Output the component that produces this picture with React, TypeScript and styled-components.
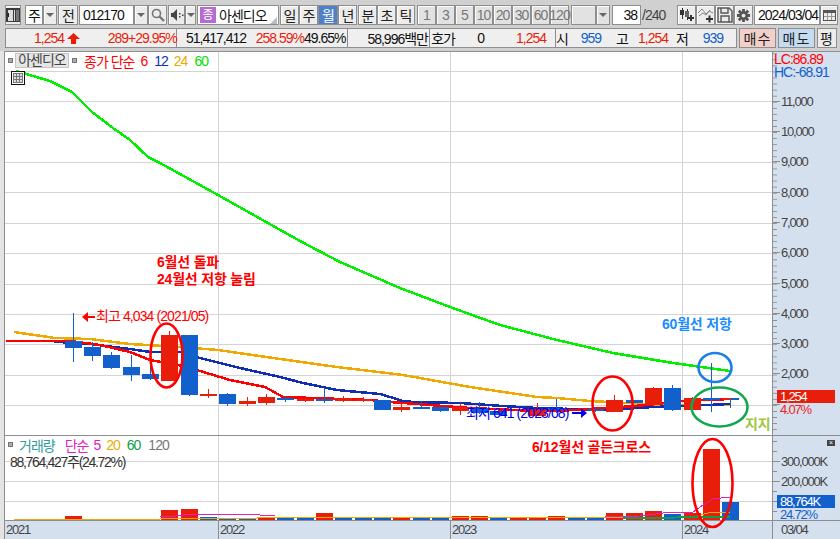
import React from "react";
import styled, { createGlobalStyle } from "styled-components";

const FONT = `"Liberation Sans", "Noto Sans CJK KR", sans-serif`;
const RED = "#e81e0a";
const BLUE = "#1160cc";

const GlobalStyle = createGlobalStyle`
  html, body { margin: 0; padding: 0; background: #d0d0d0; }
  #root { width: 840px; height: 539px; overflow: hidden; }
`;

const Page = styled.div`
  position: relative;
  width: 840px;
  height: 539px;
  overflow: hidden;
  background: #d0d0d0;
  font-family: ${FONT};
  font-size: 14px;
  letter-spacing: -1px;
  color: #222;
`;

const Toolbar = styled.div`
  display: flex;
  height: 20px;
  padding: 5px 0 0 5px;
`;

const Group = styled.div<{ $ml?: number }>`
  display: flex;
  margin-left: ${(p) => p.$ml ?? 0}px;
`;

const Btn = styled.div<{ $w: number; $active?: boolean; $muted?: boolean }>`
  box-sizing: border-box;
  width: ${(p) => p.$w}px;
  height: 20px;
  display: flex;
  align-items: center;
  justify-content: center;
  border: 1px solid #8e8e8e;
  background: ${(p) => (p.$active ? "#4f81c4" : p.$muted ? "#e2e2e2" : "#ececec")};
  color: ${(p) => (p.$active ? "#fff" : p.$muted ? "#777" : "#222")};
  box-shadow: inset 1px 1px 0 ${(p) => (p.$active ? "#4f81c4" : "#fbfbfb")};
  white-space: nowrap;
`;

const Field = styled.div<{ $w: number; $align?: string }>`
  box-sizing: border-box;
  width: ${(p) => p.$w}px;
  height: 20px;
  display: flex;
  align-items: center;
  justify-content: ${(p) => p.$align ?? "flex-start"};
  padding: 0 3px;
  border: 1px solid #8e8e8e;
  background: #fff;
  color: #111;
  white-space: nowrap;
`;

const Caret = styled.span`
  width: 0;
  height: 0;
  border-left: 4px solid transparent;
  border-right: 4px solid transparent;
  border-top: 4px solid #666;
`;

const Purple = styled.span`
  width: 16px;
  height: 16px;
  flex: none;
  margin: 0 3px 0 -1px;
  background: #b36cd2;
  color: #fff;
  font-size: 12px;
  letter-spacing: 0;
  text-align: center;
  line-height: 16px;
`;

const Corner = styled.span`
  margin-left: auto;
  margin-right: -2px;
  align-self: flex-end;
  width: 0;
  height: 0;
  border-left: 7px solid transparent;
  border-bottom: 7px solid #bbb;
`;

const TotalText = styled.div`
  width: 24px;
  margin-left: 1px;
  height: 20px;
  line-height: 20px;
  color: #444;
`;

const QuoteRow = styled.div`
  display: flex;
  height: 20px;
  padding: 3px 0 0 5px;
`;

const QuotePanel = styled.div`
  box-sizing: border-box;
  display: flex;
  width: 732px;
  height: 20px;
  border: 1px solid #8e8e8e;
  background: #efefef;
`;

const QuoteCell = styled.div<{ $w: number }>`
  box-sizing: border-box;
  display: flex;
  align-items: center;
  width: ${(p) => p.$w}px;
  height: 18px;
  border-right: 1px solid #8e8e8e;
  &:last-child { border-right: 0; }
`;

const Stat = styled.span<{ $w: number; $color?: string }>`
  width: ${(p) => p.$w}px;
  flex: none;
  color: ${(p) => p.$color ?? "#111"};
  text-align: right;
  white-space: nowrap;
`;

const ArrowSlot = styled.span`
  display: flex;
  flex: none;
  margin-left: 3px;
`;

const OrderBtn = styled(Btn)<{ $bg: string }>`
  margin-left: 2px;
  background: ${(p) => p.$bg};
  box-shadow: none;
  letter-spacing: 1px;
`;

const Chart = styled.div`
  display: flex;
  width: 840px;
  height: 488px;
  margin-top: 3px;
`;

const LeftStrip = styled.div`
  flex: none;
  box-sizing: border-box;
  width: 5px;
  background: #e4e4e4;
  border-right: 1px solid #8e8e8e;
`;

const ChartColumn = styled.div`
  flex: none;
  width: 835px;
  display: flex;
  flex-direction: column;
  background: #fff;
  border-top: 1px solid #8e8e8e;
`;

const PaneRow = styled.div<{ $h: number }>`
  position: relative;
  display: flex;
  height: ${(p) => p.$h}px;
  flex: none;
`;

const PriceRow = styled(PaneRow)`
  border-bottom: 1px solid #8e8e8e;
`;

const Plot = styled.svg`
  display: block;
  flex: none;
  width: 767px;
  height: 100%;
`;

const Axis = styled.div<{ $offset: number; $step: number; $top: number }>`
  position: relative;
  box-sizing: border-box;
  flex: none;
  width: 68px;
  padding-top: ${(p) => p.$top}px;
  background-color: #d5e0ef;
  background-image: linear-gradient(#8e8e8e 1px, transparent 1px);
  background-size: 4px ${(p) => p.$step}px;
  background-repeat: repeat-y;
  background-position: 0 ${(p) => p.$offset}px;
  border-left: 1px solid #8e8e8e;
  font-size: 13px;
  letter-spacing: -1.2px;
`;

const AxisRow = styled.div<{ $h: number }>`
  display: flex;
  align-items: center;
  height: ${(p) => p.$h}px;
  color: #444;
  &::before {
    content: "";
    width: 7px;
    height: 1px;
    margin-right: 1px;
    background: #8e8e8e;
  }
`;

const CornerReadout = styled.div`
  position: absolute;
  left: 1px;
  top: 1px;
  font-size: 14px;
  letter-spacing: -1px;
  line-height: 13px;
`;

const ReadLine = styled.div<{ $color: string }>`
  color: ${(p) => p.$color};
`;

const PriceTag = styled.div<{ $top: number; $bg: string }>`
  position: absolute;
  left: 4px;
  top: ${(p) => p.$top}px;
  width: 58px;
  height: 13px;
  padding-left: 3px;
  box-sizing: border-box;
  line-height: 13px;
  background: ${(p) => p.$bg};
  color: #fff;
`;

const TagNote = styled.div<{ $top: number; $color: string }>`
  position: absolute;
  left: 7px;
  top: ${(p) => p.$top}px;
  line-height: 13px;
  color: ${(p) => p.$color};
`;

const PaneClose = styled.div`
  position: absolute;
  right: 5px;
  top: 4px;
  width: 8px;
  height: 6px;
  background: #444;
  color: #fff;
  font-size: 7px;
  letter-spacing: 0;
  line-height: 6px;
  text-align: center;
`;

const Legend = styled.div<{ $left: number; $top: number }>`
  position: absolute;
  left: ${(p) => p.$left}px;
  top: ${(p) => p.$top}px;
  display: flex;
  align-items: center;
  height: 15px;
  white-space: nowrap;
`;

const Dot = styled.span`
  width: 3px;
  height: 3px;
  flex: none;
  border: 1px solid #777;
  background: #aaa;
`;

const NameChip = styled.span`
  box-sizing: border-box;
  width: 54px;
  height: 15px;
  margin: 0 3px 0 2px;
  background: #e6e6e6;
  border: 1px solid #c4c4c4;
  color: #444;
  line-height: 13px;
  text-align: center;
`;

const LegendItem = styled.span<{ $color: string; $ml?: number }>`
  color: ${(p) => p.$color};
  margin-left: ${(p) => p.$ml ?? 0}px;
`;

const TableIcon = styled.div`
  position: absolute;
  left: 6px;
  top: 19px;
`;

const VolumeText = styled.div`
  position: absolute;
  left: 5px;
  top: 15px;
  color: #333;
  letter-spacing: -1.3px;
  white-space: nowrap;
`;

const TimeRow = styled.div`
  display: flex;
  flex: 1;
  border-top: 1px solid #8e8e8e;
  background: #d5e0ef;
  color: #444;
  font-size: 13px;
  letter-spacing: -1.2px;
`;

const TimeCell = styled.div<{ $w: number; $end?: boolean }>`
  box-sizing: border-box;
  width: ${(p) => p.$w}px;
  flex: ${(p) => (p.$end ? 1 : "none")};
  padding-left: ${(p) => (p.$end ? 8 : 1)}px;
  border-right: ${(p) => (p.$end ? "0" : "1px solid #8e8e8e")};
  line-height: 18px;
`;

const Overlay = styled.svg`
  position: absolute;
  left: 0;
  top: 0;
  width: 840px;
  height: 539px;
  pointer-events: none;
`;

const Note = styled.text<{ $color: string }>`
  fill: ${(p) => p.$color};
  font-family: ${FONT};
  font-size: 14px;
  font-weight: 700;
  letter-spacing: -0.2px;
`;

const PriceMark = styled.text<{ $color: string }>`
  fill: ${(p) => p.$color};
  font-family: ${FONT};
  font-size: 14px;
  letter-spacing: -0.9px;
`;

const candleX = (i: number) => 72.5 + 19.35 * i;

// index, body top, body bottom, wick top, wick bottom, colour
const candles: [number, number, number, number, number, string][] = [
  [0, 341, 348, 313, 362, BLUE],
  [1, 347, 356, 342, 361, BLUE],
  [2, 355, 368, 352, 369, BLUE],
  [3, 367, 375, 355, 381, BLUE],
  [4, 374, 379, 345, 380, BLUE],
  [5, 335, 381, 331, 381, RED],
  [6, 335, 395, 335, 396, BLUE],
  [7, 394, 396, 389, 398, RED],
  [8, 394, 404, 393, 406, BLUE],
  [9, 401, 404, 397, 406, RED],
  [10, 397, 403, 394, 405, RED],
  [11, 398, 400, 396, 402, BLUE],
  [12, 399, 401, 396, 402, RED],
  [13, 399, 401, 388, 403, BLUE],
  [14, 398, 401, 396, 402, RED],
  [15, 399, 401, 397, 402, RED],
  [16, 400, 410, 400, 410, BLUE],
  [17, 407, 410, 402, 412, RED],
  [18, 407, 409, 401, 409, BLUE],
  [19, 407, 411, 407, 412, BLUE],
  [20, 407, 411, 403, 415, RED],
  [21, 408, 413, 402, 414, BLUE],
  [22, 411, 415, 411, 415, BLUE],
  [24, 409, 416, 403, 416, RED],
  [25, 408, 410, 399, 413, BLUE],
  [27, 409, 411, 407, 412, BLUE],
  [28, 400, 412, 395, 412, RED],
  [29, 400, 403, 400, 403, BLUE],
  [30, 388, 405, 387, 405, RED],
  [31, 388, 410, 385, 411, BLUE],
  [32, 398, 410, 397, 410, RED],
  [33, 398, 400, 363, 412, BLUE],
  [34, 398, 400, 398, 408, BLUE],
];

const green = "16,71 50,81 72,92 92,112 113,128 130,140 148,157 160,163 218,195 300,241 340,262 400,288 450,307 500,325 557,340 613,353 673,363 730,371";
const yellow = "14,332 55,338 90,339 130,344 180,347 218,350 280,359 337,367 403,375 470,387 537,397 557,398 590,401 647,404 673,405 730,405";
const navy = "15,341 52,341 70,343 90,344 130,349 150,352 180,352 200,358 240,368 280,377 303,383 337,390 380,394 403,401 413,402 460,403 503,406 537,408 607,410 653,407 707,405 730,404";
const red = "6,341 70,341 100,345 130,352 150,360 178,365 200,371 230,380 265,387 283,397 370,400 390,402 430,405 470,408 537,411 557,411 607,408 647,405 683,401 730,399";

// index, top of bar, colour
const volumes: [number, number, string][] = [
  [0, 516, RED], [5, 510, RED], [6, 509, RED], [7, 517, BLUE], [8, 518, BLUE], [9, 518, BLUE],
  [10, 518, RED], [11, 518, BLUE], [12, 518, BLUE], [13, 513, RED], [14, 518, BLUE], [15, 518, BLUE],
  [16, 518, BLUE], [17, 518, RED], [18, 518, BLUE], [19, 518, BLUE], [20, 516, RED], [21, 516, RED],
  [22, 518, BLUE], [23, 518, RED], [24, 518, RED], [25, 516, RED], [26, 518, BLUE], [27, 518, BLUE],
  [28, 513, RED], [29, 513, RED], [30, 511, RED], [31, 514, BLUE], [32, 513, RED], [33, 449, RED], [34, 502, BLUE],
];

const priceGrid = [71.5, 101.5, 131.5, 162.5, 192.5, 223.5, 253.5, 284.5, 314.5, 344.5, 375.5, 405.5];
const timeGrid = [218.5, 450.5, 682.5];
const priceLabels = ["11,000", "10,000", "9,000", "8,000", "7,000", "6,000", "5,000", "4,000", "3,000", "2,000", ""];

const CandleIcon = () => (
  <svg width="16" height="16" viewBox="0 0 16 16" shapeRendering="crispEdges">
    <path d="M3 1v11M8 2v11" stroke="#333" />
    <rect x="1" y="3" width="4" height="5" fill="#333" />
    <rect x="6" y="4" width="4" height="6" fill="#666" />
    <path d="M9 11h6M12 8v6" stroke="#333" strokeWidth="2" />
  </svg>
);

const LineIcon = () => (
  <svg width="16" height="16" viewBox="0 0 16 16">
    <path d="M0 6l4-4 4 5 3-3 4 2M1 9l4-3 3 2 4-5" stroke="#888" fill="none" />
    <path d="M8 12h7M11.5 8.5v7" stroke="#333" strokeWidth="2" />
  </svg>
);

const Floppy = () => (
  <svg width="16" height="16" viewBox="0 0 16 16" fill="none" stroke="#555" strokeWidth="1.4">
    <path d="M1 1h11l3 3v11H1z" />
    <path d="M4 1v5h7V1M4 15V9h8v6" />
  </svg>
);

const Gear = () => (
  <svg width="15" height="15" viewBox="0 0 16 16">
    <path d="M8 1v14M1 8h14M3 3l10 10M13 3L3 13" stroke="#555" strokeWidth="3" />
    <circle cx="8" cy="8" r="4.5" fill="#555" />
    <circle cx="8" cy="8" r="2" fill="#ececec" />
  </svg>
);

const Calendar = () => (
  <svg width="13" height="13" viewBox="0 0 13 13" shapeRendering="crispEdges" fill="none">
    <rect x="0.5" y="1.5" width="12" height="10" stroke="#555" />
    <rect x="1" y="2" width="11" height="2" fill="#555" />
    <path d="M4.5 4v7M8.5 4v7M1 7.5h11" stroke="#999" />
  </svg>
);

const Magnifier = () => (
  <svg width="14" height="14" viewBox="0 0 14 14" fill="none" stroke="#777">
    <circle cx="5.5" cy="5.5" r="4" strokeWidth="1.6" />
    <path d="M8.5 8.5l4.5 4.5" strokeWidth="2.4" />
  </svg>
);

const Speaker = () => (
  <svg width="14" height="14" viewBox="0 0 14 14" fill="#444">
    <path d="M1 5h2l4-4v12l-4-4H1z" />
    <rect x="9" y="5" width="1.5" height="1.5" />
    <rect x="9" y="8" width="1.5" height="1.5" />
    <rect x="12" y="6.5" width="1.5" height="1.5" />
  </svg>
);

const PanelIcon = () => (
  <svg width="14" height="14" viewBox="0 0 14 14" shapeRendering="crispEdges">
    <rect x="0" y="0" width="14" height="14" fill="#3a3a3a" />
    <rect x="2" y="2" width="5" height="11" fill="#ddd" />
    <rect x="8" y="2" width="1" height="11" fill="#ddd" />
    <rect x="10" y="2" width="3" height="11" fill="#777" />
    <path d="M0 7l3-3v6z" fill="#222" />
  </svg>
);

const UpArrow = () => (
  <svg width="13" height="11" viewBox="0 0 13 11">
    <path d="M6.5 0L13 6H9v5H4V6H0z" fill={RED} />
  </svg>
);

const GridButton = () => (
  <svg width="14" height="14" viewBox="0 0 14 14" shapeRendering="crispEdges">
    <rect x="0.5" y="0.5" width="13" height="13" fill="#fff" stroke="#111" />
    <rect x="2.5" y="2.5" width="9" height="9" fill="#ddd" stroke="#777" />
    <path d="M5.5 3v8M8.5 3v8M3 5.5h8M3 8.5h8" stroke="#777" />
  </svg>
);

const App = () => {
  return (
    <Page>
      <GlobalStyle />
      <Toolbar>
        <Btn $w={16}><PanelIcon /></Btn>
        <Group $ml={4}>
          <Field $w={18} $align="center">주</Field>
          <Btn $w={14}><Caret /></Btn>
        </Group>
        <Group $ml={1}><Btn $w={20}>전</Btn></Group>
        <Group $ml={1}>
          <Field $w={55}>012170</Field>
          <Btn $w={14}><Caret /></Btn>
          <Btn $w={19}><Magnifier /></Btn>
        </Group>
        <Group $ml={1}>
          <Btn $w={17}><Speaker /></Btn>
          <Btn $w={11}><Caret /></Btn>
        </Group>
        <Group $ml={1}>
          <Field $w={82}><Purple>종</Purple>아센디오<Corner /></Field>
        </Group>
        <Group $ml={1}>
          <Btn $w={19}>일</Btn>
          <Btn $w={19}>주</Btn>
          <Btn $w={20} $active>월</Btn>
          <Btn $w={19}>년</Btn>
        </Group>
        <Group $ml={1}>
          <Btn $w={19}>분</Btn>
          <Btn $w={19}>초</Btn>
          <Btn $w={19}>틱</Btn>
        </Group>
        <Group $ml={2}>
          {["1", "3", "5", "10", "20", "30", "60", "120"].map((n) => (
            <Btn key={n} $w={19} $muted>{n}</Btn>
          ))}
        </Group>
        <Group $ml={2}>
          <Btn $w={25} $muted />
          <Btn $w={14} $muted><Caret /></Btn>
        </Group>
        <Group $ml={2}>
          <Field $w={29} $align="flex-end">38</Field>
          <TotalText>/240</TotalText>
        </Group>
        <Group $ml={11}>
          <Btn $w={19}><CandleIcon /></Btn>
          <Btn $w={19}><LineIcon /></Btn>
          <Btn $w={19}><Floppy /></Btn>
          <Btn $w={19}><Gear /></Btn>
        </Group>
        <Group $ml={1}>
          <Field $w={66}>2024/03/04</Field>
          <Btn $w={18}><Calendar /></Btn>
        </Group>
      </Toolbar>

      <QuoteRow>
        <QuotePanel>
          <QuoteCell $w={171}>
            <Stat $w={58} $color={RED}>1,254</Stat>
            <ArrowSlot><UpArrow /></ArrowSlot>
            <Stat $w={48} $color={RED}>289</Stat>
            <Stat $w={47} $color={RED}>+29.95%</Stat>
          </QuoteCell>
          <QuoteCell $w={171}>
            <Stat $w={69}>51,417,412</Stat>
            <Stat $w={58} $color={RED}>258.59%</Stat>
            <Stat $w={41}>49.65%</Stat>
          </QuoteCell>
          <QuoteCell $w={82}>
            <Stat $w={80}>58,996백만</Stat>
          </QuoteCell>
          <QuoteCell $w={126}>
            <Stat $w={25}>호가</Stat>
            <Stat $w={29}>0</Stat>
            <Stat $w={62} $color={RED}>1,254</Stat>
          </QuoteCell>
          <QuoteCell $w={180}>
            <Stat $w={11}>시</Stat>
            <Stat $w={34} $color={BLUE}>959</Stat>
            <Stat $w={27}>고</Stat>
            <Stat $w={40} $color={RED}>1,254</Stat>
            <Stat $w={20}>저</Stat>
            <Stat $w={35} $color={BLUE}>939</Stat>
          </QuoteCell>
        </QuotePanel>
        <OrderBtn $w={37} $bg="#f2cfc9">매수</OrderBtn>
        <OrderBtn $w={37} $bg="#c4dbf2">매도</OrderBtn>
        <OrderBtn $w={20} $bg="#ececec">평</OrderBtn>
      </QuoteRow>

      <Chart>
        <LeftStrip />
        <ChartColumn>
          <PriceRow $h={383}>
            <Plot viewBox="5 52 767 383" preserveAspectRatio="none" shapeRendering="crispEdges">
              {priceGrid.map((y) => (
                <line key={y} x1="5" x2="772" y1={y} y2={y} stroke="#d4d4d4" />
              ))}
              {timeGrid.map((x) => (
                <line key={x} x1={x} x2={x} y1="52" y2="435" stroke="#d4d4d4" />
              ))}
              <polyline points={yellow} fill="none" stroke="#eeaa00" strokeWidth="2.5" />
              <polyline points={navy} fill="none" stroke="#0f2fb0" strokeWidth="2.5" />
              <polyline points={red} fill="none" stroke="#ff0000" strokeWidth="2.5" />
              <polyline points={green} fill="none" stroke="#00f000" strokeWidth="2.5" />
              {candles.map(([i, top, bottom, hi, lo, color]) => (
                <g key={i}>
                  <line x1={Math.round(candleX(i)) + 0.5} x2={Math.round(candleX(i)) + 0.5} y1={hi} y2={lo} stroke={color} />
                  <rect x={Math.round(candleX(i)) - 8} y={top} width="17" height={bottom - top} fill={color} />
                </g>
              ))}
              <rect x="722" y="398" width="9" height="2" fill={RED} />
            </Plot>
            <Axis $top={34} $step={6.064} $offset={1.3}>
              {priceLabels.map((label, i) => (
                <AxisRow key={i} $h={30.32}>{label}</AxisRow>
              ))}
              <CornerReadout>
                <ReadLine $color="#ff0000">LC:86.89</ReadLine>
                <ReadLine $color={BLUE}>HC:-68.91</ReadLine>
              </CornerReadout>
              <PriceTag $top={338} $bg={RED}>1,254</PriceTag>
              <TagNote $top={351} $color="#ee2222">4.07%</TagNote>
            </Axis>
            <Legend $left={3} $top={1}>
              <Dot />
              <NameChip>아센디오</NameChip>
              <Dot />
              <LegendItem $color="#ff0000" $ml={7}>종가 단순</LegendItem>
              <LegendItem $color="#ff0000" $ml={6}>6</LegendItem>
              <LegendItem $color="#0f2fb0" $ml={7}>12</LegendItem>
              <LegendItem $color="#eeaa00" $ml={6}>24</LegendItem>
              <LegendItem $color="#00e000" $ml={7}>60</LegendItem>
            </Legend>
            <TableIcon><GridButton /></TableIcon>
          </PriceRow>

          <PaneRow $h={84}>
            <Plot viewBox="5 436 767 84" preserveAspectRatio="none" shapeRendering="crispEdges">
              {[461.5, 481.5, 501.5].map((y) => (
                <line key={y} x1="5" x2="772" y1={y} y2={y} stroke="#d4d4d4" />
              ))}
              {timeGrid.map((x) => (
                <line key={x} x1={x} x2={x} y1="436" y2="520" stroke="#d4d4d4" />
              ))}
              {volumes.map(([i, top, color]) => (
                <rect key={i} x={Math.round(candleX(i)) - 8} y={top} width="17" height={520 - top} fill={color} />
              ))}
              <polyline points="14,519 160,519" fill="none" stroke="#888" />
              <polyline points="14,520 160,519 257,518 687,517 697,516 708,513 730,512" fill="none" stroke="#eeaa00" />
              <polyline points="623,518 730,517" fill="none" stroke="#0aa04a" strokeWidth="2" />
              <polyline points="160,517 175,516 183,515 198,514 250,514 260,515 275,516" fill="none" stroke="#e020c0" />
              <polyline points="605,517 640,516 663,513 693,512 703,505 713,499 730,497" fill="none" stroke="#e020c0" />
            </Plot>
            <Axis $top={15} $step={10} $offset={5}>
              {["300,000K", "200,000K", "100,000K"].map((label) => (
                <AxisRow key={label} $h={20}>{label}</AxisRow>
              ))}
              <PaneClose>×</PaneClose>
              <PriceTag $top={59} $bg={BLUE}>88,764K</PriceTag>
              <TagNote $top={72} $color={BLUE}>24.72%</TagNote>
            </Axis>
            <Legend $left={3} $top={1}>
              <Dot />
              <LegendItem $color="#2e9c9c" $ml={6}>거래량</LegendItem>
              <LegendItem $color="#e020c0" $ml={10}>단순</LegendItem>
              <LegendItem $color="#e020c0" $ml={5}>5</LegendItem>
              <LegendItem $color="#eeaa00" $ml={6}>20</LegendItem>
              <LegendItem $color="#0aa04a" $ml={7}>60</LegendItem>
              <LegendItem $color="#777" $ml={8}>120</LegendItem>
            </Legend>
            <VolumeText>88,764,427주(24.72%)</VolumeText>
          </PaneRow>

          <TimeRow>
            <TimeCell $w={214}>2021</TimeCell>
            <TimeCell $w={232}>2022</TimeCell>
            <TimeCell $w={232}>2023</TimeCell>
            <TimeCell $w={90}>2024</TimeCell>
            <TimeCell $w={67} $end>03/04</TimeCell>
          </TimeRow>
        </ChartColumn>
      </Chart>

      <Overlay viewBox="0 0 840 539">
        <ellipse cx="166.5" cy="355.5" rx="16" ry="32" fill="none" stroke="#ff0000" strokeWidth="2.6" />
        <ellipse cx="612.5" cy="403.5" rx="20" ry="27" fill="none" stroke="#ff0000" strokeWidth="2.6" />
        <ellipse cx="715" cy="367.5" rx="16.5" ry="14.5" fill="none" stroke="#1a80e8" strokeWidth="2.6" />
        <ellipse cx="719.5" cy="407" rx="28" ry="19.5" fill="none" stroke="#0fa84f" strokeWidth="2.6" />
        <ellipse cx="712.5" cy="483" rx="20" ry="44" fill="none" stroke="#ff0000" strokeWidth="2.6" />
        <Note $color="#ff0000" x="157" y="267">6월선 돌파</Note>
        <Note $color="#ff0000" x="157" y="284">24월선 저항 눌림</Note>
        <Note $color="#1a8cff" x="662" y="329">60월선 저항</Note>
        <Note $color="#ff0000" x="532" y="452">6/12월선 골든크로스</Note>
        <Note $color="#9dc63f" x="745" y="429">지지</Note>
        <path d="M82 317l6-5v4h7v2h-7v4z" fill="#ff0000" />
        <PriceMark $color="#ff0000" x="96" y="321">최고 4,034 (2021/05)</PriceMark>
        <PriceMark $color="#0000ee" x="466" y="418">최저 641 (2023/08)</PriceMark>
        <path d="M587 413l-6-5v4h-9v2h9v4z" fill="#0000ee" />
      </Overlay>
    </Page>
  );
};

export default App;
